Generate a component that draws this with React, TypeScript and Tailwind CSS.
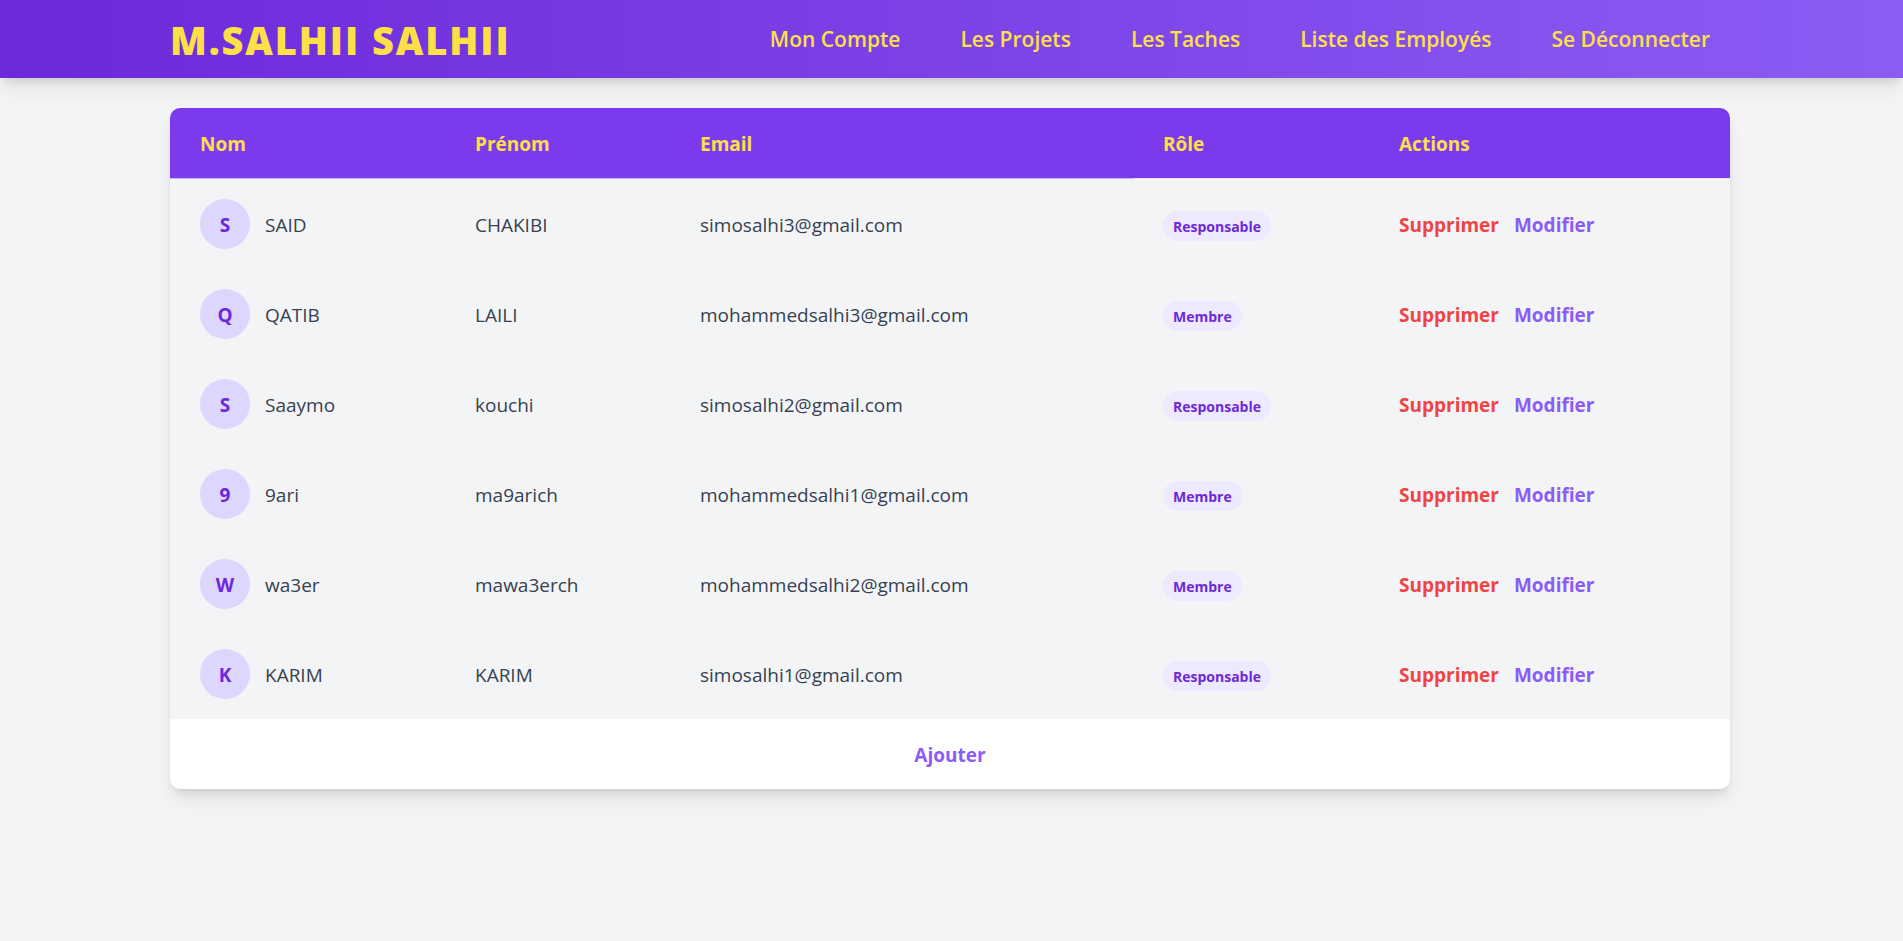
const links = ["Mon Compte", "Les Projets", "Les Taches", "Liste des Employés", "Se Déconnecter"];

type Employee = { nom: string; prenom: string; email: string; role: "Responsable" | "Membre" };

const employees: Employee[] = [
  { nom: "SAID", prenom: "CHAKIBI", email: "simosalhi3@gmail.com", role: "Responsable" },
  { nom: "QATIB", prenom: "LAILI", email: "mohammedsalhi3@gmail.com", role: "Membre" },
  { nom: "Saaymo", prenom: "kouchi", email: "simosalhi2@gmail.com", role: "Responsable" },
  { nom: "9ari", prenom: "ma9arich", email: "mohammedsalhi1@gmail.com", role: "Membre" },
  { nom: "wa3er", prenom: "mawa3erch", email: "mohammedsalhi2@gmail.com", role: "Membre" },
  { nom: "KARIM", prenom: "KARIM", email: "simosalhi1@gmail.com", role: "Responsable" },
];

function Navbar() {
  return (
    <header className="flex h-[78px] items-center justify-between bg-linear-to-r/srgb from-[#6d28d9] to-[#8b5cf6] pl-[170px] pr-[173px] text-[#fde047] shadow-[0_12px_19px_-4px_rgba(0,0,0,0.1),0_5px_8px_-3px_rgba(0,0,0,0.1)]">
      <a href="#" className="whitespace-nowrap pt-0.5 text-[38px] leading-[50px] font-extrabold tracking-wider">
        M.SALHII SALHII
      </a>
      <nav className="flex gap-[60px] pr-5">
        {links.map((link) => (
          <a key={link} href="#" className="whitespace-nowrap text-[21px] leading-[35px] font-semibold">
            {link}
          </a>
        ))}
      </nav>
    </header>
  );
}

function EmployeeRow({ nom, prenom, email, role }: Employee) {
  return (
    <tr className="h-[90px]">
      <td className="px-[30px]">
        <div className="flex items-center">
          <span className="mr-[15px] flex size-[50px] items-center justify-center rounded-full bg-[#ddd6fe] pt-0.5 font-bold text-[#6d28d9]">
            {nom[0].toUpperCase()}
          </span>
          <span className="pt-0.5">{nom}</span>
        </div>
      </td>
      <td className="px-[30px] pt-0.5">{prenom}</td>
      <td className="px-[30px] pt-0.5">{email}</td>
      <td className="px-[30px] pt-0.5">
        <span className="inline-block rounded-full bg-[#ede9fe] px-[10px] pt-0.5 align-middle text-[14px] leading-7 font-bold text-[#6d28d9]">
          {role}
        </span>
      </td>
      <td className="px-[30px] pt-0.5">
        <div className="flex gap-[15px]">
          <button type="button" className="font-bold text-[#ef4444]">Supprimer</button>
          <button type="button" className="font-bold text-[#8b5cf6]">Modifier</button>
        </div>
      </td>
    </tr>
  );
}

export default function App() {
  return (
    <div className="min-h-screen bg-[#f3f4f6] font-['Open_Sans','Noto_Sans',sans-serif]">
      <Navbar />
      <main className="pt-[30px] pl-[170px] pr-[173px]">
        <div className="overflow-hidden rounded-[10px] bg-white shadow-[0_12px_19px_-4px_rgba(0,0,0,0.1),0_5px_8px_-3px_rgba(0,0,0,0.1)]">
          <table className="w-full table-fixed border-separate border-spacing-0 text-left text-[19px] leading-[30px]">
            <colgroup>
              <col className="w-[275px]" />
              <col className="w-[225px]" />
              <col className="w-[463px]" />
              <col className="w-[236px]" />
              <col />
            </colgroup>
            <thead className="text-[#fde047]">
              <tr className="h-[71px]">
                <th className="border-b border-[#c4b5fd] bg-[#7c3aed] px-[30px] pt-0.5 font-bold">Nom</th>
                <th className="border-b border-[#c4b5fd] bg-[#7c3aed] px-[30px] pt-0.5 font-bold">Prénom</th>
                <th className="border-b border-[#c4b5fd] bg-[#7c3aed] px-[30px] pt-0.5 font-bold">Email</th>
                <th className="border-b border-[#e5e7eb] bg-[#7c3aed] px-[30px] pt-0.5 font-bold">Rôle</th>
                <th className="border-b border-[#e5e7eb] bg-[#7c3aed] px-[30px] pt-0.5 font-bold">Actions</th>
              </tr>
            </thead>
            <tbody className="bg-[#f3f4f6] text-[#374151]">
              {employees.map((employee) => (
                <EmployeeRow key={employee.email} {...employee} />
              ))}
            </tbody>
          </table>
          <div className="flex h-[70px] items-center justify-center pt-0.5 text-[19px] leading-[30px]">
            <button type="button" className="font-bold text-[#8b5cf6]">Ajouter</button>
          </div>
        </div>
      </main>
    </div>
  );
}
